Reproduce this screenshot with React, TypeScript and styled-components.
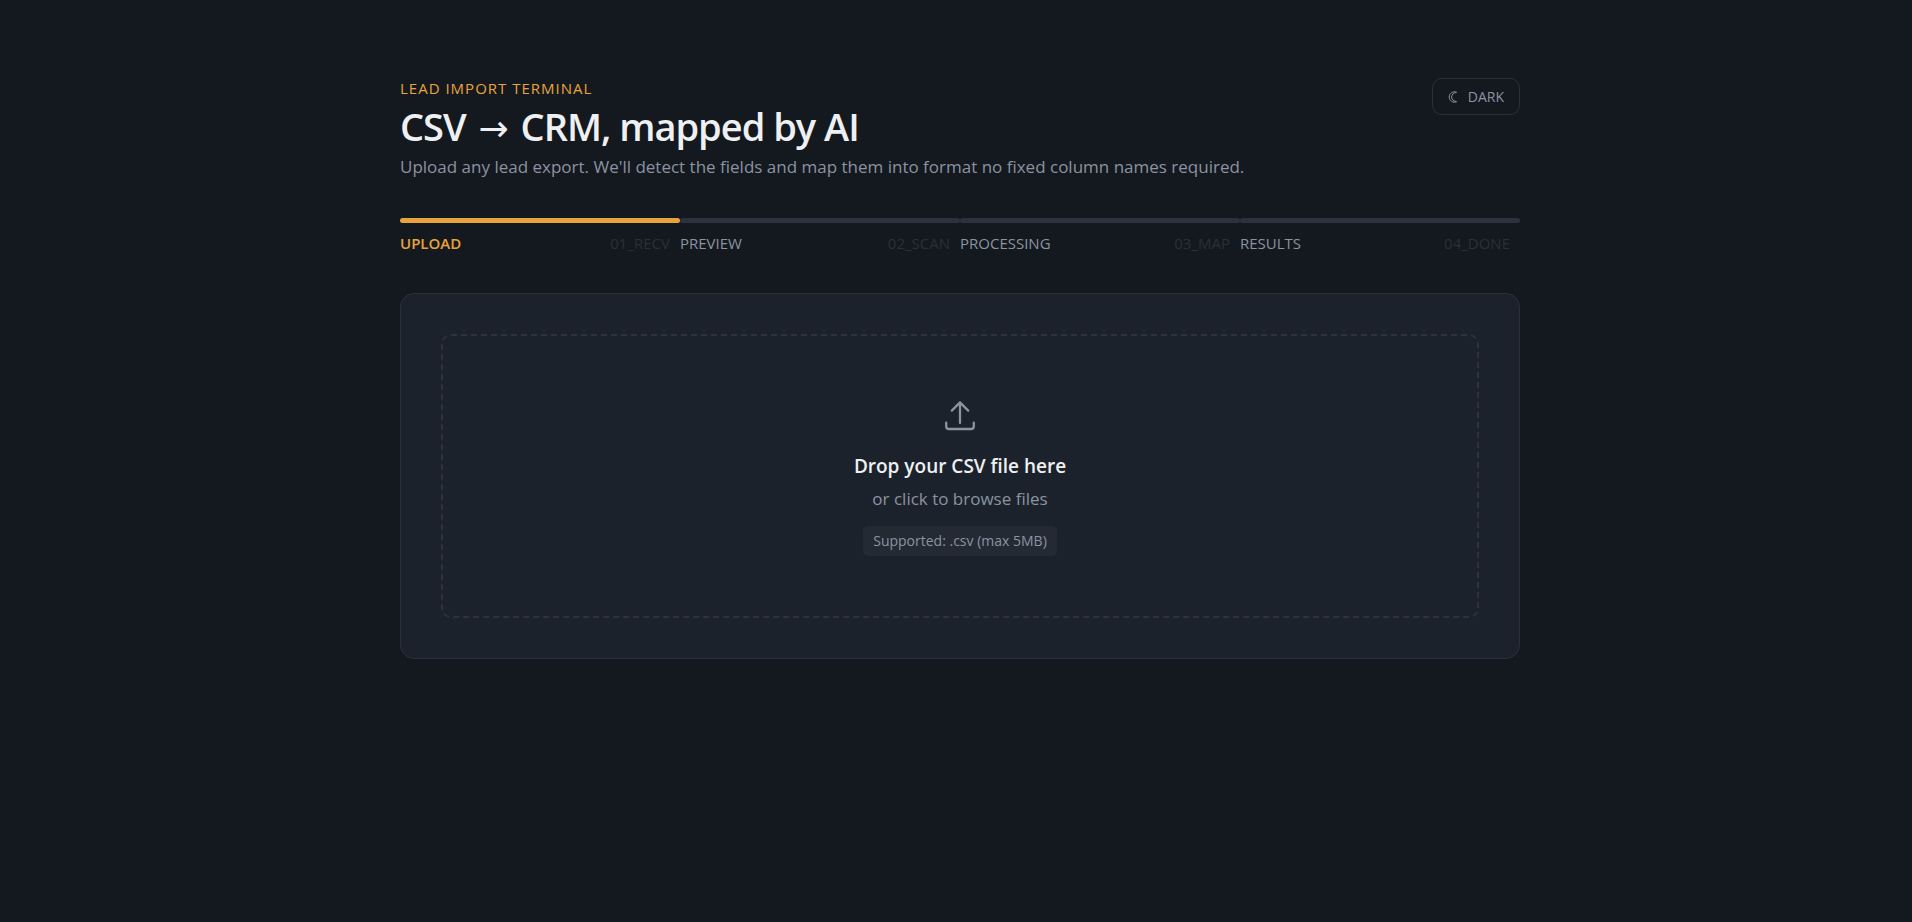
import React from 'react';
import styled, { createGlobalStyle } from 'styled-components';

const GlobalStyle = createGlobalStyle`
  *, *::before, *::after { box-sizing: border-box; }
  body {
    margin: 0;
    background: #14191f;
    color: #eef0f2;
    font-family: 'Segoe UI', 'Open Sans', 'Noto Sans', sans-serif;
  }
`;

const Page = styled.div`
  padding: 78px 0 64px 8px;
`;

const Shell = styled.main`
  width: 100%;
  max-width: 1120px;
  margin: 0 auto;
`;

const Header = styled.header`
  display: flex;
  justify-content: space-between;
  align-items: flex-start;
  margin-bottom: 39px;
`;

const Eyebrow = styled.p`
  margin: 0;
  font-size: 15px;
  line-height: 20px;
  letter-spacing: 1px;
  color: #e8a33d;
`;

const Title = styled.h1`
  margin: 2px 0 3px;
  font-size: 38px;
  line-height: 52px;
  font-weight: 600;
  letter-spacing: -1px;
`;

const Arrow = styled.span`
  margin: 0 4px;
  font-family: 'DejaVu Sans', sans-serif;
  font-size: 36px;
  font-weight: 400;
  line-height: 1;
`;

const Subtitle = styled.p`
  margin: 0;
  font-size: 17px;
  line-height: 24px;
  color: #8b93a1;
`;

const ThemeButton = styled.button`
  display: flex;
  align-items: center;
  gap: 10px;
  height: 37px;
  padding: 0 15px;
  border: 1px solid #2a2f3a;
  border-radius: 10px;
  background: transparent;
  color: #8b93a1;
  font-family: inherit;
  font-size: 14px;
  cursor: pointer;
`;

const Steps = styled.ol`
  display: grid;
  grid-template-columns: repeat(4, 1fr);
  margin: 0 0 40px;
  padding: 0;
  list-style: none;
`;

const Step = styled.li<{ $active?: boolean }>`
  font-size: 15px;
  line-height: 20px;
  color: ${p => (p.$active ? '#e8a33d' : '#8b93a1')};
  font-weight: ${p => (p.$active ? 600 : 400)};

  &::before {
    content: '';
    display: block;
    height: 5px;
    margin-bottom: 10px;
    border-radius: 3px;
    background: ${p => (p.$active ? '#e8a33d' : '#2d323d')};
  }
`;

const StepLabels = styled.div`
  display: flex;
  justify-content: space-between;
  padding-right: 10px;
`;

const StepCode = styled.span`
  font-weight: 400;
  color: #2a2f3a;
`;

const Card = styled.section`
  padding: 40px;
  border: 1px solid #2a2f3a;
  border-radius: 14px;
  background: #1c222b;
`;

const DropZone = styled.button`
  display: flex;
  flex-direction: column;
  align-items: center;
  width: 100%;
  padding: 60px 24px;
  border: 2px dashed #2d323d;
  border-radius: 10px;
  background: transparent;
  color: #8b93a1;
  font-family: inherit;
  cursor: pointer;
`;

const DropTitle = styled.span`
  margin-top: 16px;
  font-size: 19px;
  line-height: 28px;
  font-weight: 600;
  color: #eef0f2;
`;

const DropHint = styled.span`
  margin-top: 7px;
  font-size: 17px;
  line-height: 24px;
`;

const Badge = styled.span`
  margin-top: 15px;
  padding: 5px 10px;
  border-radius: 5px;
  background: #232a33;
  font-size: 14px;
  line-height: 20px;
`;

const steps = [
  { label: 'UPLOAD', code: '01_RECV' },
  { label: 'PREVIEW', code: '02_SCAN' },
  { label: 'PROCESSING', code: '03_MAP' },
  { label: 'RESULTS', code: '04_DONE' },
];

const MoonIcon = () => (
  <svg width="10" height="12" viewBox="0 0 10 12" fill="none" stroke="currentColor" strokeWidth="1" strokeLinejoin="round" aria-hidden="true">
    <path d="M8.6 1.3C4.6 -0.2 1.2 2.4 1.2 6S4.6 12.2 8.6 10.7C5.6 10.2 3.6 8.5 3.6 6S5.6 1.8 8.6 1.3Z" />
  </svg>
);

const UploadIcon = () => (
  <svg width="40" height="40" viewBox="0 0 40 40" fill="none" stroke="currentColor" strokeWidth="2.3" strokeLinecap="round" strokeLinejoin="round" aria-hidden="true">
    <path d="M20 27V6.4M11.8 14.6L20 6.4L28.2 14.6M6.2 26.6V30.2A2.8 2.8 0 0 0 9 33H31A2.8 2.8 0 0 0 33.8 30.2V26.6" />
  </svg>
);

export default function App() {
  return (
    <Page>
      <GlobalStyle />
      <Shell>
        <Header>
          <div>
            <Eyebrow>LEAD IMPORT TERMINAL</Eyebrow>
            <Title>
              CSV <Arrow>→</Arrow> CRM, mapped by AI
            </Title>
            <Subtitle>
              Upload any lead export. We'll detect the fields and map them into format no fixed column names required.
            </Subtitle>
          </div>
          <ThemeButton type="button">
            <MoonIcon />
            DARK
          </ThemeButton>
        </Header>
        <Steps>
          {steps.map((step, i) => (
            <Step key={step.code} $active={i === 0}>
              <StepLabels>
                <span>{step.label}</span>
                <StepCode>{step.code}</StepCode>
              </StepLabels>
            </Step>
          ))}
        </Steps>
        <Card>
          <DropZone type="button">
            <UploadIcon />
            <DropTitle>Drop your CSV file here</DropTitle>
            <DropHint>or click to browse files</DropHint>
            <Badge>Supported: .csv (max 5MB)</Badge>
          </DropZone>
        </Card>
      </Shell>
    </Page>
  );
}
